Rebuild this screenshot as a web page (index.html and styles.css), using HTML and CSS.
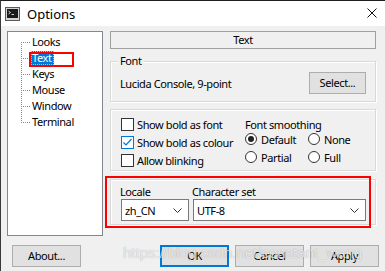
FILE: index.html
```
<!DOCTYPE html>
<html>
	<head>
		<meta charset="UTF-8">
		<title>Options</title>
		<link rel="stylesheet" href="styles.css">
	</head>
	<body>
		<div class="window">
			<div class="titlebar">
				<svg class="app-icon" width="15" height="14" viewBox="0 0 15 14">
					<rect x="0.5" y="0.5" width="14" height="13" fill="#d4d4d4" stroke="#5a5a5a"/>
					<rect x="2" y="2" width="11" height="9" fill="#1a1a1a"/>
					<path d="M3.5 4 L5.5 5.5 L3.5 7" fill="none" stroke="#fff" stroke-width="0.8"/>
					<line x1="6.5" y1="7.5" x2="9" y2="7.5" stroke="#fff" stroke-width="0.8"/>
				</svg>
				<span class="title">Options</span>
				<svg class="close" width="10" height="10" viewBox="0 0 10 10">
					<path d="M0.5 0.5 L9.5 9.5 M9.5 0.5 L0.5 9.5" stroke="#111" stroke-width="1"/>
				</svg>
			</div>
			<div class="content">
				<div class="main">
					<div class="tree">
						<ul class="tree-list">
							<li>Looks</li>
							<li class="sel"><span>Text</span><i class="mark tree-mark"></i></li>
							<li>Keys</li>
							<li>Mouse</li>
							<li>Window</li>
							<li>Terminal</li>
						</ul>
					</div>
					<div class="panel">
						<div class="panel-head">Text</div>
						<div class="group font-group">
							<span class="group-title">Font</span>
							<div class="font-row">
								<span>Lucida Console, 9-point</span>
								<div class="btn select-btn">Select...</div>
							</div>
						</div>
						<div class="group opts">
							<div class="checks">
								<div class="row"><i class="check"></i>Show bold as font</div>
								<div class="row"><i class="check on"><svg width="11" height="11" viewBox="0 0 11 11"><path d="M1.5 5.5 L4 8 L9.5 2" fill="none" stroke="#0078d7" stroke-width="1.2"/></svg></i>Show bold as colour</div>
								<div class="row"><i class="check"></i>Allow blinking</div>
							</div>
							<div class="smoothing">
								<div class="row">Font smoothing</div>
								<div class="radios">
									<div class="row"><i class="radio on"></i>Default</div>
									<div class="row"><i class="radio"></i>None</div>
									<div class="row"><i class="radio"></i>Partial</div>
									<div class="row"><i class="radio"></i>Full</div>
								</div>
							</div>
						</div>
						<div class="group locale">
							<div class="field locale-field">
								<span class="field-label">Locale</span>
								<div class="combo"><span>zh_CN</span><svg width="9" height="5" viewBox="0 0 9 5"><path d="M0.5 0.5 L4.5 4.5 L8.5 0.5" fill="none" stroke="#333"/></svg></div>
							</div>
							<div class="field charset-field">
								<span class="field-label">Character set</span>
								<div class="combo"><span>UTF-8</span><svg width="9" height="5" viewBox="0 0 9 5"><path d="M0.5 0.5 L4.5 4.5 L8.5 0.5" fill="none" stroke="#333"/></svg></div>
							</div>
							<i class="mark locale-mark"></i>
						</div>
					</div>
				</div>
				<div class="buttons">
					<div class="btn about-btn">About...</div>
					<div class="btn ok-btn">OK</div>
					<div class="btn">Cancel</div>
					<div class="btn">Apply</div>
				</div>
			</div>
			<div class="watermark">https://blog.csdn.net/constant_wang</div>
		</div>
	</body>
</html>
```
FILE: styles.css
```
*{
	margin:0;
	padding:0;
	box-sizing:border-box;
}
ul,li{
	list-style:none;
}
body{
	width:385px;
	height:271px;
	overflow:hidden;
	font-family:"Noto Sans","Open Sans",sans-serif;
	font-size:11px;
	letter-spacing:-0.4px;
	color:#000;
	background:#f0f0f0;
}
.window{
	position:relative;
	width:385px;
	height:271px;
	background:#f0f0f0;
	border-top:1px solid #1e1e1e;
	border-left:1px solid #3a3a3a;
}
.titlebar{
	display:flex;
	align-items:center;
	height:25px;
	background:#fff;
	padding:0 8px 0 4px;
}
.app-icon{
	margin-top:1px;
}
.title{
	font-size:13px;
	letter-spacing:0;
	margin-left:7px;
	flex:1;
}
.close{
	margin-top:-2px;
}
.content{
	padding:5px 0 0 6px;
}
.main{
	display:flex;
	gap:7px;
}
.tree{
	width:96px;
	height:205px;
	background:#fff;
	border:1px solid #828790;
	padding-top:2px;
}
.tree-list{
	position:relative;
	margin-left:13px;
}
.tree-list:before{
	content:"";
	position:absolute;
	left:0;
	top:8px;
	bottom:7px;
	border-left:1px dotted #8a8a8a;
}
.tree-list li{
	position:relative;
	height:16px;
	line-height:16px;
	padding-left:11px;
	white-space:nowrap;
}
.tree-list li:before{
	content:"";
	position:absolute;
	left:0;
	top:8px;
	width:9px;
	border-top:1px dotted #8a8a8a;
}
.tree-list .sel span{
	display:inline-block;
	line-height:14px;
	margin-left:-1px;
	padding:0 2px 0 1px;
	background:#0078d7;
	color:#fff;
	outline:1px dotted #e0c060;
	outline-offset:-1px;
}
.mark{
	position:absolute;
	border:2px solid #f00;
}
.tree-mark{
	left:8px;
	top:2px;
	width:45px;
	height:15px;
}
.panel{
	width:266px;
	display:flex;
	flex-direction:column;
}
.panel-head{
	height:18px;
	line-height:16px;
	text-align:center;
	background:#f0f0f0;
	border:1px solid #a0a0a0;
}
.group{
	position:relative;
	border:1px solid #d9d9d9;
	box-shadow:1px 1px 0 #fff,inset 1px 1px 0 #fff;
}
.font-group{
	height:41px;
	margin-top:12px;
	padding:0 9px 0 9px;
	display:flex;
	flex-direction:column;
}
.group-title{
	align-self:flex-start;
	margin:-8px 0 0 -2px;
	padding:0 2px;
	line-height:14px;
	background:#f0f0f0;
}
.font-row{
	display:flex;
	align-items:center;
	justify-content:space-between;
	margin-top:4px;
}
.btn{
	height:22px;
	line-height:20px;
	text-align:center;
	background:#e1e1e1;
	border:1px solid #adadad;
}
.select-btn{
	width:57px;
}
.opts{
	height:62px;
	margin-top:7px;
	padding:5px 0 0 10px;
	display:flex;
}
.row{
	display:flex;
	align-items:center;
	height:18px;
	white-space:nowrap;
}
.checks{
	width:124px;
}
.check{
	width:13px;
	height:13px;
	margin-right:3px;
	background:#fff;
	border:1px solid #333;
	display:flex;
	align-items:center;
	justify-content:center;
}
.check.on{
	border-color:#0078d7;
}
.radios{
	display:grid;
	grid-template-columns:63px auto;
	margin-top:-3px;
}
.radio{
	width:12px;
	height:12px;
	margin-right:4px;
	border:1px solid #333;
	border-radius:50%;
	background:#fff;
	display:flex;
	align-items:center;
	justify-content:center;
}
.radio.on:after{
	content:"";
	width:6px;
	height:6px;
	border-radius:50%;
	background:#222;
}
.locale{
	height:46px;
	margin-top:8px;
	padding:5px 9px 0 10px;
	display:flex;
	gap:4px;
}
.field{
	display:flex;
	flex-direction:column;
}
.field-label{
	line-height:14px;
	margin-left:-1px;
}
.locale-field{
	width:68px;
}
.charset-field{
	flex:1;
}
.combo{
	height:22px;
	display:flex;
	align-items:center;
	justify-content:space-between;
	padding:0 6px 0 3px;
	background:#fff;
	border:1px solid #7a7a7a;
}
.locale-mark{
	left:-6px;
	top:-4px;
	width:266px;
	height:52px;
}
.buttons{
	display:flex;
	gap:6px;
	margin-top:9px;
	padding-left:5px;
}
.buttons .btn{
	width:69px;
}
.about-btn{
	margin-right:73px;
}
.ok-btn{
	border:2px solid #0078d7;
	line-height:18px;
}
.watermark{
	position:absolute;
	left:122px;
	top:243px;
	font-family:"Liberation Sans",sans-serif;
	font-size:15px;
	letter-spacing:0;
	color:rgba(255,255,255,0.75);
	text-shadow:0 0 1px rgba(0,0,0,0.35);
	white-space:nowrap;
}
```
